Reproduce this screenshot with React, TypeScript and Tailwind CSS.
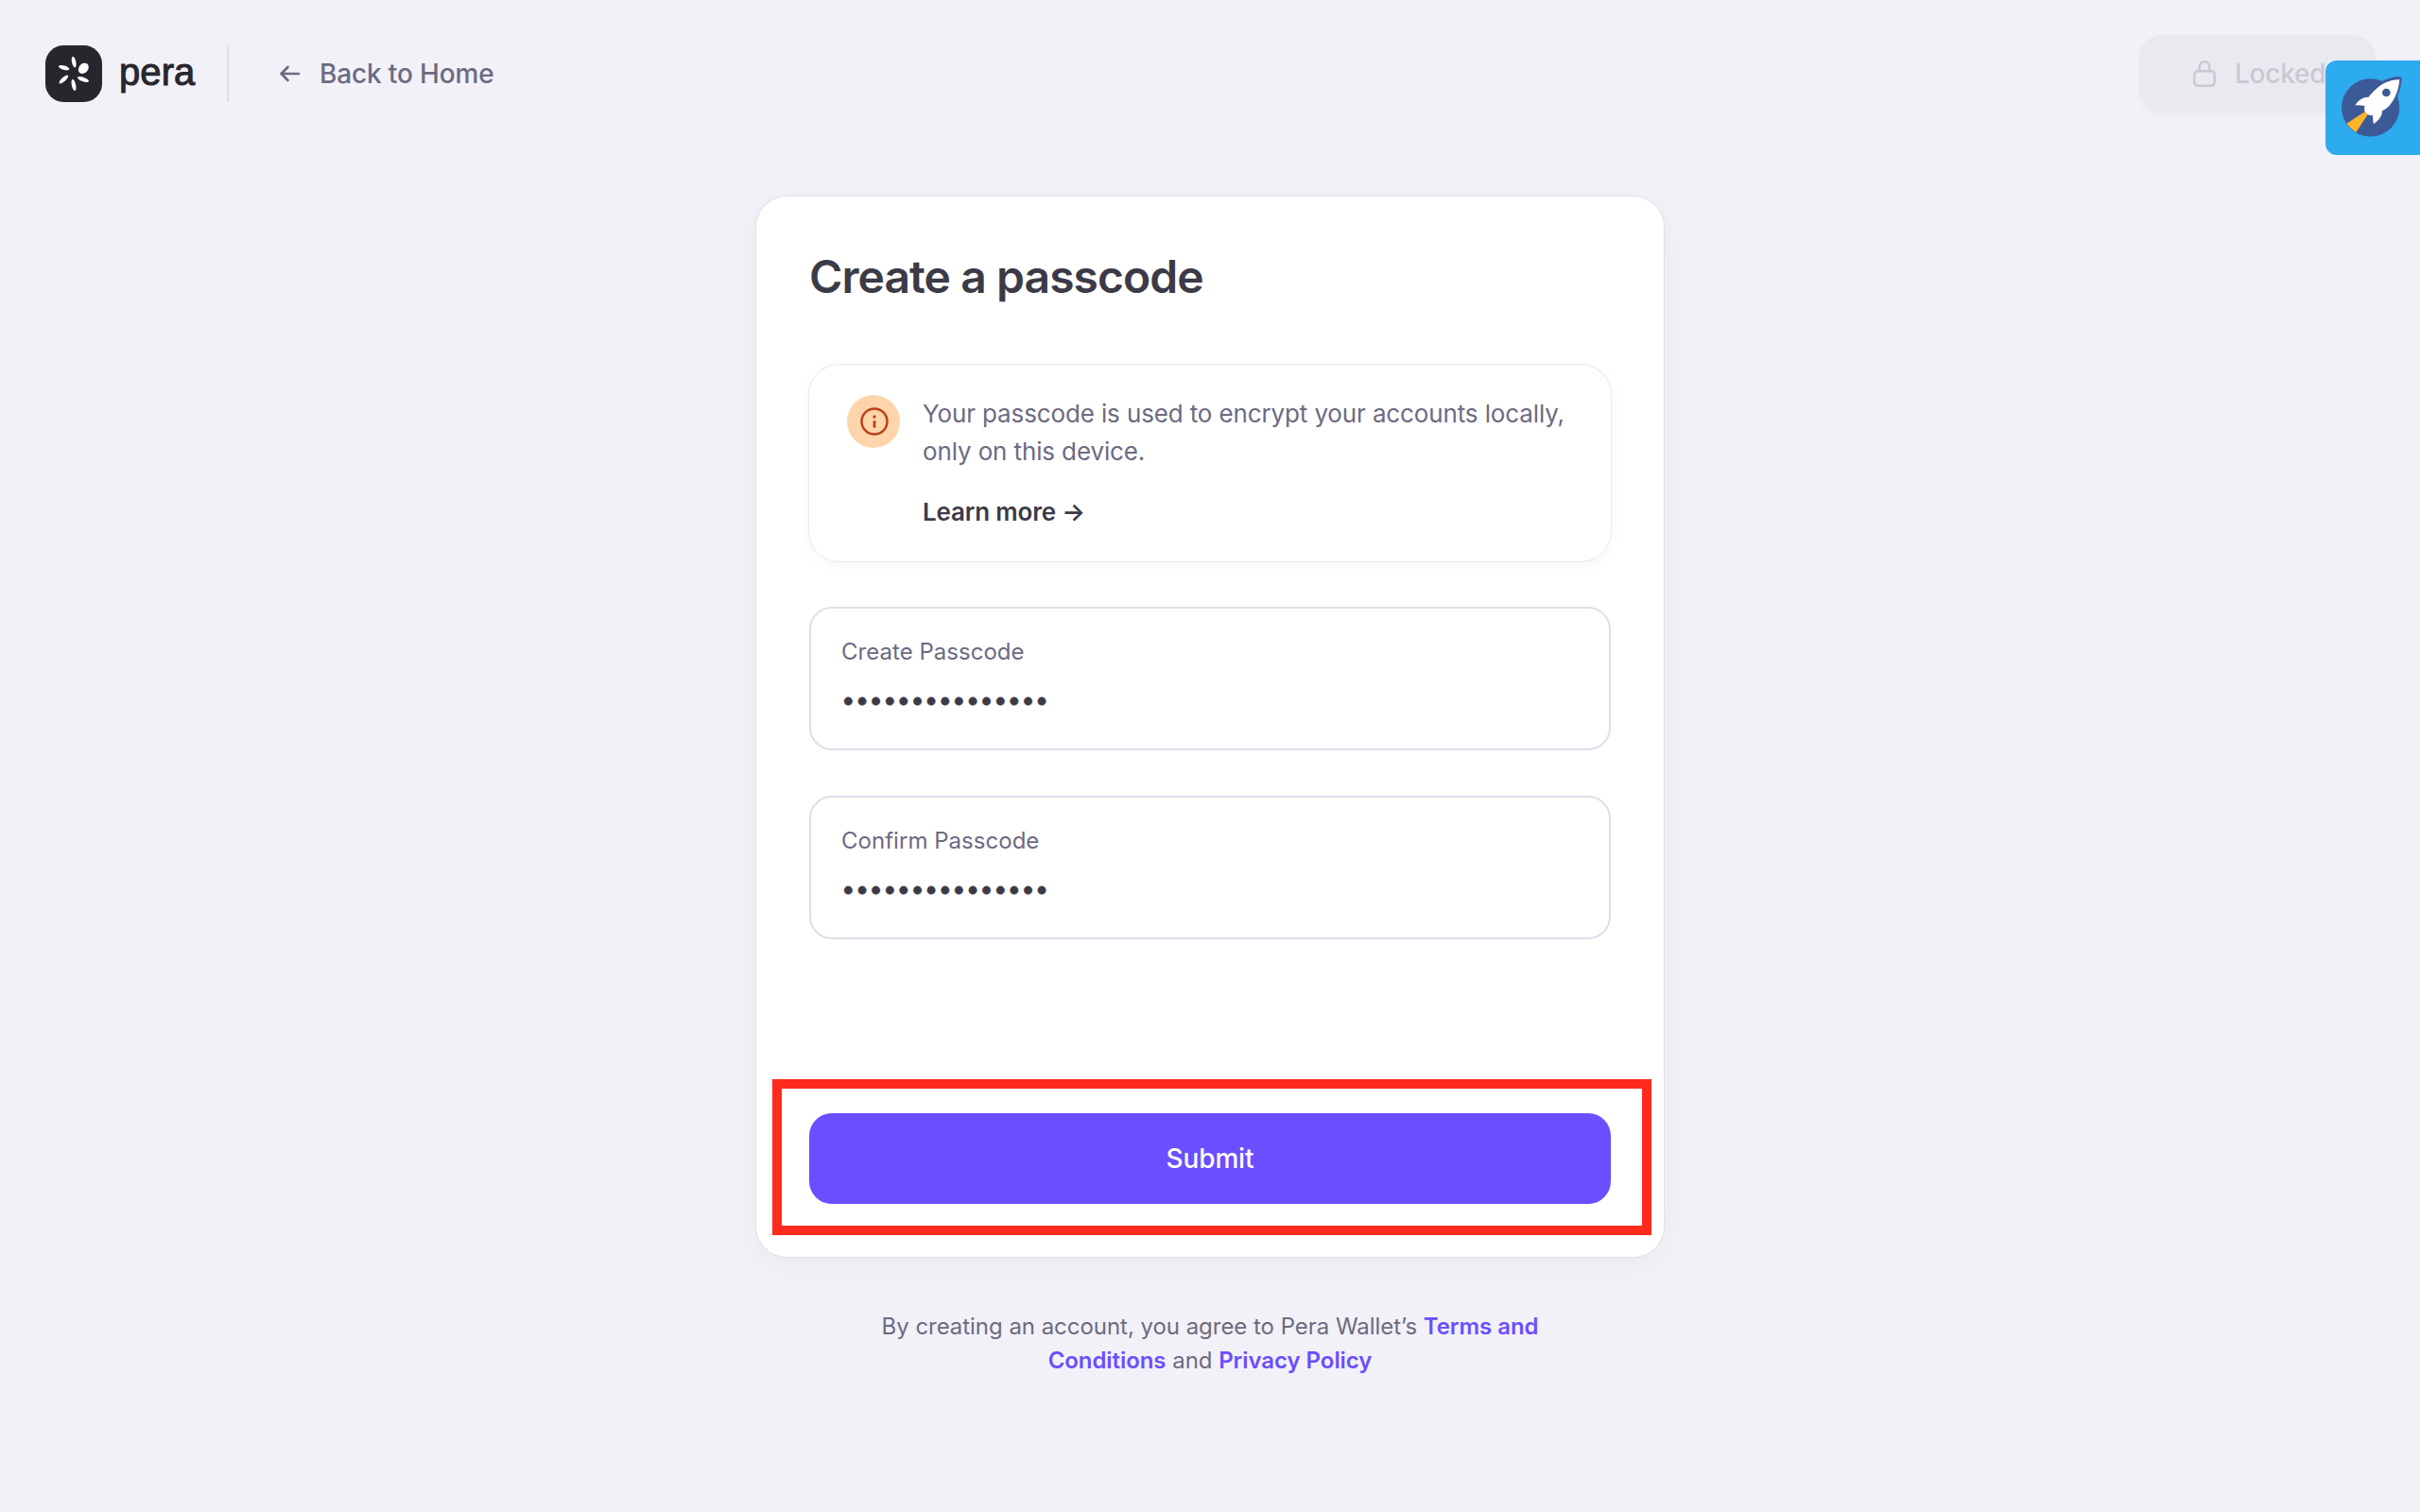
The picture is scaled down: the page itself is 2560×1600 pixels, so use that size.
import React from 'react';

const DOTS = '•'.repeat(15);

function PeraMark() {
  return (
    <svg viewBox="0 0 180 180" className="size-[60px]" aria-hidden="true">
      <rect width="180" height="180" rx="58" fill="#27262c" />
      <g fill="#fff">
        <ellipse cx="90.5" cy="53" rx="6.5" ry="17.5" transform="rotate(-12 90.5 53)" />
        <ellipse cx="90" cy="126" rx="6.5" ry="18.5" transform="rotate(-12 90 126)" />
        <ellipse cx="59" cy="71" rx="17.5" ry="6.5" transform="rotate(16 59 71)" />
        <ellipse cx="120" cy="108" rx="19" ry="6.5" transform="rotate(20 120 108)" />
        <ellipse cx="58" cy="108" rx="18.5" ry="6.5" transform="rotate(-43 58 108)" />
        <ellipse cx="121" cy="73" rx="18.5" ry="14.5" transform="rotate(-50 121 73)" />
      </g>
    </svg>
  );
}

function Rocket() {
  return (
    <svg viewBox="0 0 300 300" className="size-[100px]" aria-hidden="true">
      <circle cx="143" cy="149.500" r="92" fill="#3d5a98" />
      <path
        d="M179 66C196 57 214 52 235 51Q243 51 242 60C240 79 236 97 229 113L190 130L160 90Z"
        fill="#3d5a98"
      />
      <path
        d="M235 60C233 92 222 121 203 143C196 151 188 156 180 160C180 178 168 191 153 202C151 192 150 182 150 174C144 175 139 174 134 172L125 163C123 157 123 151 125 145C115 142 104 141 94 142C103 129 116 115 137 116C150 99 170 79 188 71C203 64 219 61 235 60Z"
        fill="#fff"
      />
      <circle cx="193" cy="102" r="13" fill="#3d5a98" />
      <path d="M125 163L67 200Q79 217 97 228L134 172Z" fill="#fbb52b" />
    </svg>
  );
}

function PasscodeField({ label }: { label: string }) {
  return (
    <div className="h-[152px] rounded-3xl border-2 border-[#e0deea] px-8 pt-7">
      <div className="text-[24px] leading-9 tracking-[0.03px] text-[#6c6a82]">{label}</div>
      <div className="mt-[15px] text-[26px] leading-9 text-[#3c3a47] [-webkit-text-stroke:0.8px_#3c3a47]">{DOTS}</div>
    </div>
  );
}

export default function App() {
  return (
    <div className="relative h-[1600px] w-[2560px] overflow-hidden bg-[#f2f1f7] font-['Inter',sans-serif]">
      <header className="flex h-[156px] items-center px-12">
        <PeraMark />
        <span className="ml-[18px] w-[114px] pb-[5px] font-['Liberation_Sans',sans-serif] text-[40px] leading-none tracking-[0.1px] text-[#27262c] [-webkit-text-stroke:1px_#27262c]">
          pera
        </span>
        <div className="h-[60px] w-[2px] bg-[#dfdeea]" />
        <a className="ml-[54px] flex items-center text-[28px] leading-10 font-medium tracking-[-0.15px] text-[#6c6a82]">
          <svg viewBox="0 0 22 18" className="mr-5 h-[18px] w-[22px]" fill="none" stroke="currentColor" strokeWidth="2.600" strokeLinecap="round" strokeLinejoin="round">
            <path d="M20 9H1.500M8.500 2L1.500 9L8.500 16" />
          </svg>
          Back to Home
        </a>
        <div className="ml-auto flex h-20 w-[248px] items-center rounded-3xl bg-[#e9eaef] pl-14 text-[28px] leading-10 font-medium tracking-[-0.25px] text-[#c9c8d5] shadow-[0_0_0_1px_#e7e7ed,0_4px_12px_rgba(60,58,90,0.03)]">
          <svg viewBox="0 0 24 28" className="h-7 w-6" fill="none" stroke="currentColor" strokeWidth="2.400">
            <rect x="1.300" y="11.200" width="21.400" height="15.500" rx="3.500" />
            <path d="M6.700 11V6.600a5.300 5.300 0 0 1 10.600 0V11" />
          </svg>
          <span className="ml-5">Locked</span>
        </div>
      </header>

      <div className="absolute top-16 right-0 size-[100px] rounded-l-xl bg-[#2cabef]">
        <Rocket />
      </div>

      <main className="mx-auto mt-[52px] w-[960px]">
        <section className="relative h-[1122px] rounded-[32px] bg-white p-14 shadow-[0_0_0_1px_#e0dfe9,0_8px_32px_rgba(60,58,90,0.04)]">
          <h1 className="pt-px text-[48px] leading-[56px] font-semibold tracking-[-0.93px] text-[#3c3a47]">
            Create a passcode
          </h1>

          <div className="mt-[65px] flex h-[208px] rounded-[32px] px-10 py-8 shadow-[0_0_0_1px_#eae9f0,0_4px_16px_rgba(60,58,90,0.04)]">
            <div className="flex size-14 items-center justify-center rounded-full bg-[#fed5ab] pl-px">
              <svg viewBox="0 0 30 30" className="size-[30px]" fill="none" stroke="#b9421c">
                <circle cx="15" cy="15" r="13.500" strokeWidth="2.500" />
                <path d="M15 15.300V20.500" strokeWidth="2.800" strokeLinecap="round" />
                <circle cx="15" cy="10" r="1.700" fill="#b9421c" stroke="none" />
              </svg>
            </div>
            <div className="ml-6 text-[26px] leading-10">
              <p className="tracking-[-0.13px] whitespace-nowrap text-[#6c6a82]">
                Your passcode is used to encrypt your accounts locally,
                <br />
                only on this device.
              </p>
              <a className="mt-6 block font-semibold tracking-[-0.17px] text-[#3c3a47]">Learn more →</a>
            </div>
          </div>

          <div className="mt-12 flex flex-col gap-12">
            <PasscodeField label="Create Passcode" />
            <PasscodeField label="Confirm Passcode" />
          </div>

          <button className="mt-[184px] flex h-24 w-full items-center justify-center rounded-3xl bg-[#6b4eff] text-[28px] font-medium tracking-[-0.14px] text-white">
            Submit
          </button>

          <div className="absolute top-[934px] left-[17px] h-[165px] w-[930px] border-10 border-[#fe2a1e]" />
        </section>

        <p className="mt-14 text-center text-[24px] leading-9 tracking-[-0.04px] text-[#6c6a82]">
          By creating an account, you agree to Pera Wallet’s{' '}
          <a className="font-semibold tracking-[-0.06px] text-[#6b4eff]">Terms and</a>
          <br />
          <a className="font-semibold tracking-[-0.06px] text-[#6b4eff]">Conditions</a> and{' '}
          <a className="font-semibold tracking-[-0.06px] text-[#6b4eff]">Privacy Policy</a>
        </p>
      </main>
    </div>
  );
}
